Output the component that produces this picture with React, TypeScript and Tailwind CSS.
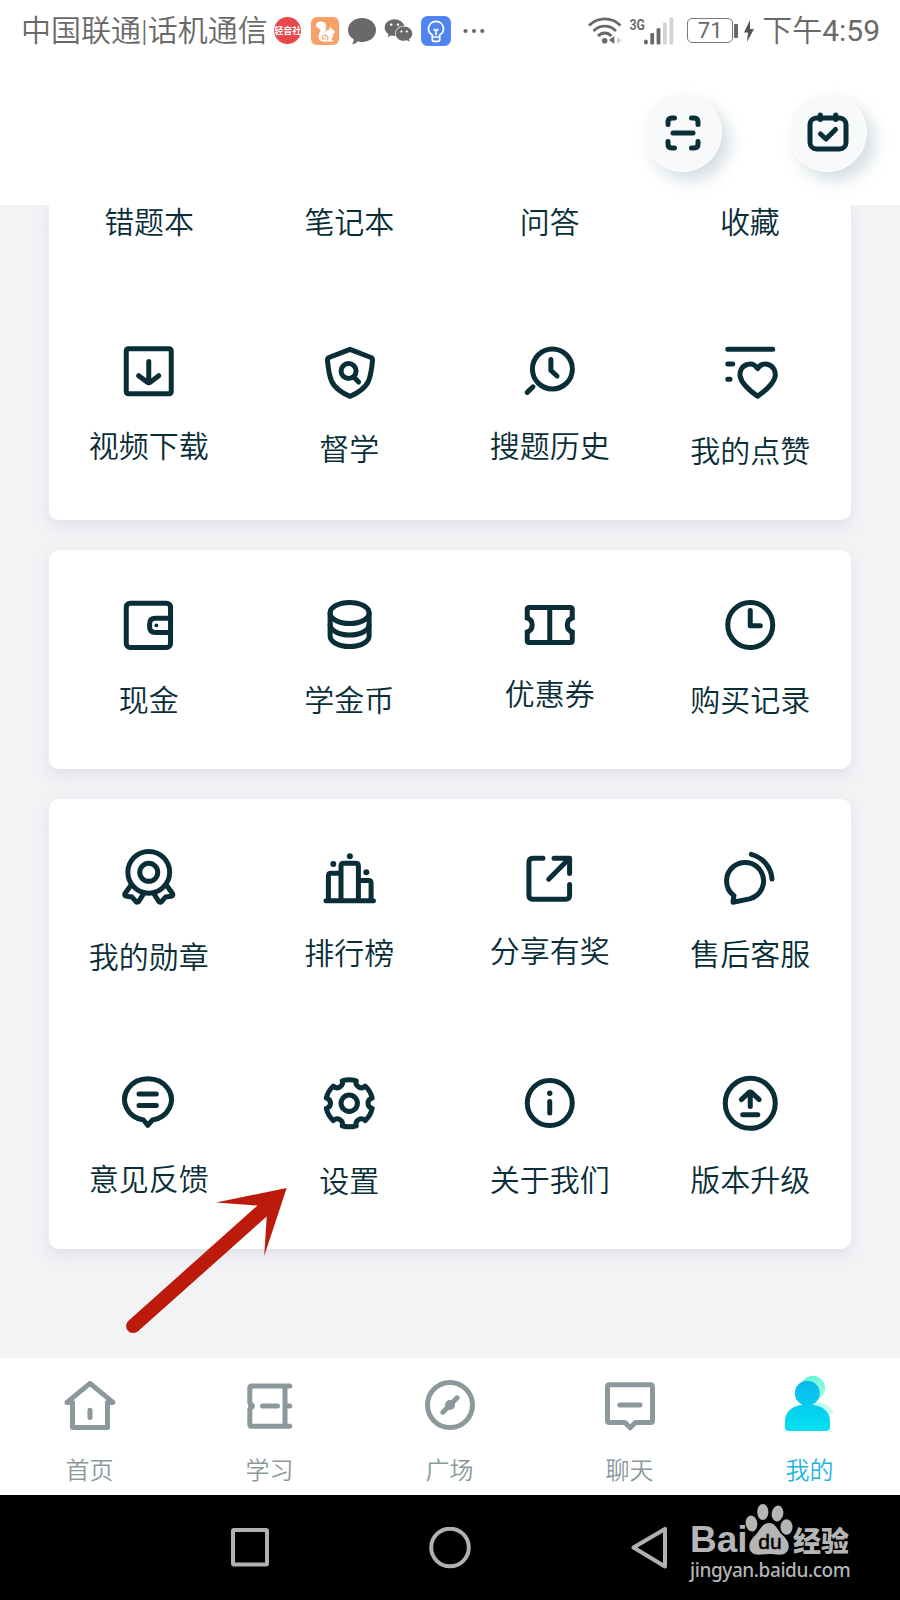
import type { ReactNode } from 'react';
import { FaWeixin } from 'react-icons/fa';
import clsx from 'clsx';

type Item = { label: string; gap: string; icon: ReactNode };

const studyTools: Item[] = [
  {
    label: '视频下载',
    gap: 'mt-[27px]',
    icon: (
      <>
        <rect x="7.25" y="6.7" width="45" height="45" rx="2" />
        <path d="M29.75 19.5V40M19.7 33.7L28 40Q29.75 41.3 31.5 40L39.8 33.7" />
      </>
    ),
  },
  {
    label: '督学',
    gap: 'mt-[30px]',
    icon: (
      <>
        <path d="M30 7.3L51 15.5Q52.7 16.5 52.5 18.5C51.8 26 51 33 48.5 39C45.5 46 37 51.8 30 54.3C23 51.8 14.5 46 11.5 39C9 33 8.2 26 7.5 18.5Q7.3 16.5 9 15.5Z" />
        <circle cx="28.6" cy="29" r="7.5" />
        <path d="M34 35.3L38.6 40" />
      </>
    ),
  },
  {
    label: '搜题历史',
    gap: 'mt-[27px]',
    icon: (
      <>
        <circle cx="32.4" cy="27" r="20" />
        <path d="M30.9 17.5V28.5L37 34M13 44.8L7.2 50.4" />
      </>
    ),
  },
  {
    label: '我的点赞',
    gap: 'mt-[32px]',
    icon: (
      <>
        <path d="M6.75 7.3H51.75M6.75 22H11.7M6.75 37.3H9" />
        <path d="M36.6 26.5C34 22.7 30 21.5 27 22.3C21 23.5 18.3 29 19.2 34.5C20.5 42 28.5 48.5 36.6 54.3C44.7 48.5 52.9 42 54.1 34.5C55 29 52 23.5 46.3 22.3C43 21.5 39.2 22.7 36.6 26.5Z" />
      </>
    ),
  },
];

const walletTools: Item[] = [
  {
    label: '现金',
    gap: 'mt-[28px]',
    icon: (
      <>
        <rect x="7.25" y="8.2" width="44.3" height="44.3" rx="4" />
        <path d="M51.5 23.2H36.5Q30.6 23.2 30.6 29V31.7Q30.6 37.5 36.5 37.5H51.5" />
        <circle cx="37.4" cy="30.4" r="1.9" fill="currentColor" stroke="none" />
      </>
    ),
  },
  {
    label: '学金币',
    gap: 'mt-[28px]',
    icon: (
      <>
        <ellipse cx="29.6" cy="18" rx="19.5" ry="10.5" />
        <path d="M10.1 18V41C10.1 46.8 18.8 51.5 29.6 51.5S49.1 46.8 49.1 41V18" />
        <path d="M10.1 29.5C10.1 35.3 18.8 40 29.6 40S49.1 35.3 49.1 29.5" />
      </>
    ),
  },
  {
    label: '优惠券',
    gap: 'mt-[22px]',
    icon: (
      <>
        <path
          strokeLinecap="butt"
          d="M7.25 25V14.5Q7.25 12.5 9.25 12.5H50.25Q52.25 12.5 52.25 14.5V25M7.25 35V45.5Q7.25 47.5 9.25 47.5H50.25Q52.25 47.5 52.25 45.5V35M29.75 12.5V47.5"
        />
        <path strokeLinecap="butt" d="M6 22.6C10 23.5 12.2 26.5 12.2 30S10 36.5 6 37.4M53.5 22.6C49.5 23.5 47.3 26.5 47.3 30S49.5 36.5 53.5 37.4" />
      </>
    ),
  },
  {
    label: '购买记录',
    gap: 'mt-[28px]',
    icon: (
      <>
        <circle cx="29.25" cy="30" r="22.5" />
        <path d="M29.25 15.5V30.8H39.3" />
      </>
    ),
  },
];

const serviceTools: Item[] = [
  {
    label: '我的勋章',
    gap: 'mt-[33px]',
    icon: (
      <>
        <circle cx="29.75" cy="25.3" r="20.9" />
        <circle cx="29.75" cy="25.3" r="9" />
        <path d="M11 39.5L5.9 46.8Q5 49 7.5 49.3L13 50L17 54.7Q18.6 56 20 54L24.5 46.8" />
        <path d="M48.5 39.5L53.6 46.8Q54.5 49 52 49.3L46.5 50L42.5 54.7Q40.9 56 39.5 54L35 46.8" />
      </>
    ),
  },
  {
    label: '排行榜',
    gap: 'mt-[29px]',
    icon: (
      <>
        <path d="M6 53.7H53.4M8.4 53.7V29Q8.4 26.2 11 26.2H21M21 53.7V19Q21 16.2 23.8 16.2H35.6Q38.4 16.2 38.4 19V53.7M38.4 33.4H48.3Q51.1 33.4 51.1 36.2V53.7" />
        <g fill="currentColor" stroke="none">
          <circle cx="13.3" cy="17" r="3" />
          <circle cx="29.9" cy="9.2" r="3" />
          <circle cx="46.3" cy="25.3" r="3" />
        </g>
      </>
    ),
  },
  {
    label: '分享有奖',
    gap: 'mt-[27px]',
    icon: (
      <path d="M23 11.2H12.9Q8.9 11.2 8.9 15.2V48.2Q8.9 52.2 12.9 52.2H45.6Q49.6 52.2 49.6 48.2V37.5M34 11.2H49.6V26.5M48.5 12.3L28.7 32.2" />
    ),
  },
  {
    label: '售后客服',
    gap: 'mt-[30px]',
    icon: (
      <path d="M12.9 48.7A18.5 18.5 0 1 1 28.5 51.9L12 55.2L12.9 48.7M30.3 7.3A27.5 27.5 0 0 1 51 32" />
    ),
  },
  {
    label: '意见反馈',
    gap: 'mt-[29px]',
    icon: (
      <>
        <path d="M24.5 47A23.4 20.8 0 1 1 33.5 47L28.7 52.3Z" />
        <path d="M20 21H37.3M20 32.4H37.3" />
      </>
    ),
  },
  {
    label: '设置',
    gap: 'mt-[31px]',
    icon: (
      <>
        <path d="M22.26 7.86A23.5 23.5 0 0 1 36.24 7.86A5.3 5.3 0 0 0 45.19 13.03A23.5 23.5 0 0 1 52.17 25.13A5.3 5.3 0 0 0 52.17 35.47A23.5 23.5 0 0 1 45.19 47.57A5.3 5.3 0 0 0 36.24 52.74A23.5 23.5 0 0 1 22.26 52.74A5.3 5.3 0 0 0 13.31 47.57A23.5 23.5 0 0 1 6.33 35.47A5.3 5.3 0 0 0 6.33 25.13A23.5 23.5 0 0 1 13.31 13.03A5.3 5.3 0 0 0 22.26 7.86Z" />
        <circle cx="29.25" cy="30.3" r="8.2" />
      </>
    ),
  },
  {
    label: '关于我们',
    gap: 'mt-[30px]',
    icon: (
      <>
        <circle cx="29.75" cy="30" r="22.5" />
        <circle cx="29.75" cy="20.3" r="2.7" fill="currentColor" stroke="none" />
        <path d="M29.75 28.4V40" />
      </>
    ),
  },
  {
    label: '版本升级',
    gap: 'mt-[30px]',
    icon: (
      <>
        <circle cx="29.25" cy="30.3" r="25" />
        <path d="M29.25 20V33.5M20.3 26.6L27.6 19.8Q29.25 18.5 30.9 19.8L38.2 26.6M21.7 41.7H36.8" />
      </>
    ),
  },
];

const tabs = [
  {
    label: '首页',
    icon: (
      <path d="M12.5 27.4H7L30 8.4L53 27.4H47.5V52.5H12.5ZM30 35.3V42.5" />
    ),
  },
  {
    label: '学习',
    icon: (
      <>
        <path d="M49.8 11H11.8Q9.8 11 9.8 13V27.5L12.5 31L9.8 34.5V49.2Q9.8 51.2 11.8 51.2H49.8M45 11V51.2M45 31H49.8M22.5 31H37.5" />
        <path d="M9 29L12 31L9 33Z" fill="currentColor" strokeWidth="1" />
      </>
    ),
  },
  {
    label: '广场',
    icon: (
      <>
        <circle cx="30" cy="30" r="22.5" />
        <path d="M22.8 37.2L37.2 22.8" />
        <circle cx="30" cy="30" r="5" fill="currentColor" stroke="none" />
      </>
    ),
  },
  {
    label: '聊天',
    icon: (
      <path d="M9.5 9.8H50.5Q52.5 9.8 52.5 11.8V45.5Q52.5 47.5 50.5 47.5H35.5L30.2 52.8L25 47.5H9.5Q7.5 47.5 7.5 45.5V11.8Q7.5 9.8 9.5 9.8ZM19.8 30H40" />
    ),
  },
  {
    label: '我的',
    active: true,
    icon: (
      <g stroke="none">
        <defs>
          <linearGradient id="me" x1="0" y1="0" x2="0" y2="1">
            <stop offset="0" stopColor="#0cb8e9" />
            <stop offset="1" stopColor="#02e1f1" />
          </linearGradient>
          <linearGradient id="meBack" x1="0" y1="0" x2="0" y2="1">
            <stop offset="0" stopColor="#66f7d2" />
            <stop offset="1" stopColor="#d9fbf8" />
          </linearGradient>
        </defs>
        <path d="M32.7 0.8a12.5 12.5 0 1 1-.1 0ZM30 27.5C42 26 52.5 31 54 39.5L44 40Z" fill="url(#meBack)" />
        <path
          d="M27.3 5.8a12.5 12.5 0 0 1 5 24C43 31.2 50 37 50 46V52Q50 56 46 56H9Q5 56 5 52V46C5 37 12 31.2 22.3 29.8A12.5 12.5 0 0 1 27.3 5.8Z"
          fill="url(#me)"
        />
      </g>
    ),
  },
];

function LineIcon({ children, className }: { children: ReactNode; className?: string }) {
  return (
    <svg
      viewBox="0 0 60 60"
      fill="none"
      stroke="currentColor"
      strokeWidth="5"
      strokeLinecap="round"
      strokeLinejoin="round"
      className={clsx('h-[60px] w-[60px] shrink-0', className)}
    >
      {children}
    </svg>
  );
}

function ToolGrid({ items, className }: { items: Item[]; className?: string }) {
  return (
    <div className={clsx('grid grid-cols-4 text-[#092e38]', className)}>
      {items.map((item) => (
        <div key={item.label} className="flex flex-col items-center">
          <LineIcon>{item.icon}</LineIcon>
          <span className={clsx('mr-px text-[30px] font-[350] leading-[30px] whitespace-nowrap', item.gap)}>{item.label}</span>
        </div>
      ))}
    </div>
  );
}

function StatusBar() {
  return (
    <div className="flex h-[61px] items-center pl-[21px] pr-[20px] text-[#696969]">
      <span className="font-[Roboto,'Noto_Sans_CJK_SC',sans-serif] text-[30px] font-[350] leading-[30px] whitespace-nowrap">
        中国联通|话机通信
      </span>
      <div className="ml-auto mr-[103px] flex items-center">
        <span className="flex h-[27px] w-[27px] items-center justify-center overflow-hidden rounded-full bg-[#e8484b] text-[9px] font-bold whitespace-nowrap text-white">
          轻音社
        </span>
        <svg viewBox="0 0 28 28" className="ml-[10px] h-7 w-7">
          <rect width="28" height="28" rx="6" fill="#f8a067" />
          <path
            fill="#fff"
            d="M13.5 5.5C9.5 3 4.8 5 5 8.5C5.2 11.5 9 11 9.5 13.5C9.8 15.2 7 17 7.5 20.5C7.8 23 10 24.5 13 24.5H22.5L20.5 22C22.5 20 22.5 18.5 21.3 16.8C23 17 24.3 15.8 23.8 14.2L20.5 11.2L19.5 9.5L18 12.5C16 13 15 14.5 14 15C15.5 12 16 8 13.5 5.5Z"
          />
          <path d="M16 23.5C18 21.5 16.7 17.5 13.3 18C10.5 18.5 10.5 22 13 22.2C14.7 22.2 14.8 20.2 13.4 20.2" fill="none" stroke="#f8a067" strokeWidth="1.1" />
        </svg>
        <svg viewBox="0 0 30 28" className="ml-[8px] h-7 w-[30px]" fill="#696969">
          <path d="M15 1C23 1 29 6 29 13S23 25 15 25C13 25 12 24.7 10.8 24.3C9.5 26 7.5 27 5 27.3C6.3 25.6 6.8 24 6.7 22.3C3 20 1 17 1 13C1 6 7 1 15 1Z" />
        </svg>
        <FaWeixin className="ml-[7px] h-[29px] w-[29px]" />
        <svg viewBox="0 0 30 30" className="ml-[8px] h-[30px] w-[30px]" fill="none" stroke="#fff" strokeWidth="1.7">
          <rect width="30" height="30" rx="6.5" fill="#5084f1" stroke="none" />
          <path d="M11.3 21V19C8.8 17.5 7.5 15.3 7.5 12.8A7.5 7.5 0 0 1 22.5 12.8C22.5 15.3 21.2 17.5 18.7 19V21Z" />
          <path d="M11.3 21V23.5Q11.3 25.3 13 25.3H17Q18.7 25.3 18.7 23.5V21M15 19V14M12.8 13L15 15L17.2 13" />
        </svg>
        <svg viewBox="0 0 22 6" className="ml-[12px] h-[6px] w-[22px]" fill="#696969">
          <circle cx="2.5" cy="3" r="2.1" />
          <circle cx="11" cy="3" r="2.1" />
          <circle cx="19.3" cy="3" r="2.1" />
        </svg>
      </div>
      <svg viewBox="0 0 34 28" className="h-7 w-[34px]" fill="none" stroke="#696969" strokeWidth="2.8">
        <path d="M1 8.5C10 -.3 23.5 -.3 32.5 8.5M5.5 14C12 7.5 21.5 7.5 28 14M10 19C14 15 19.5 15 23.5 19" />
        <circle cx="16.7" cy="23.8" r="2.8" fill="#696969" stroke="none" />
        <path d="M26.3 19V27L21 23Z" fill="#696969" stroke="none" />
        <path d="M29 20V27L33.5 23.5Z" fill="#d0d0d0" stroke="none" />
      </svg>
      <svg viewBox="0 0 44 28" className="ml-[8px] h-7 w-[44px]">
        <text x="-0.5" y="12.5" fontSize="15.5" fontWeight="700" fill="#696969" textLength="15.5" lengthAdjust="spacingAndGlyphs" fontFamily="Roboto, sans-serif">
          3G
        </text>
        <g fill="#696969">
          <rect x="14" y="22.5" width="3.8" height="5" rx="1.9" />
          <rect x="20.3" y="16" width="3.8" height="11.5" rx="1" />
          <rect x="26.6" y="11.3" width="3.8" height="16.2" rx="1" />
        </g>
        <g fill="#d3d3d3">
          <rect x="33" y="5.5" width="3.8" height="22" rx="1" />
          <rect x="39.5" y="0.5" width="3.8" height="27" rx="1" />
        </g>
      </svg>
      <div className="ml-[13px] flex items-center">
        <span className="flex h-[25px] w-[46px] items-center justify-center rounded-[5px] border-[1.5px] border-[#7a7a7a] font-[Roboto,sans-serif] text-[22px] leading-none">
          71
        </span>
        <span className="ml-[1px] h-[14px] w-[4px] rounded-[1px] bg-[#696969]" />
      </div>
      <svg viewBox="0 0 10 22" className="ml-[6px] h-[22px] w-[10px]" fill="#555">
        <path d="M6 0L0 12.5H4L3 22L10 9H6Z" />
      </svg>
      <span className="ml-[8px] font-[Roboto,'Noto_Sans_CJK_SC',sans-serif] text-[30px] leading-[30px] whitespace-nowrap">
        <span className="font-[350]">下午</span>4:59
      </span>
    </div>
  );
}

function RoundButton({ children }: { children: ReactNode }) {
  return (
    <button className="flex h-[79px] w-[79px] items-center justify-center rounded-full border border-white bg-[#f8f9fb] text-[#092e38] shadow-[8px_9px_16px_rgba(110,135,150,0.28)]">
      {children}
    </button>
  );
}

export default function App() {
  return (
    <div className="relative flex h-[1600px] w-[900px] flex-col overflow-hidden bg-[#f2f3f5] font-['Noto_Sans_CJK_SC',sans-serif]">
      <header className="relative z-10 h-[205px] shrink-0 bg-white">
        <StatusBar />
        <div className="flex justify-end gap-[66px] pt-[32px] pr-[33px]">
          <RoundButton>
            <svg viewBox="0 0 36 36" className="h-9 w-9" fill="none" stroke="currentColor" strokeWidth="5" strokeLinecap="round">
              <path d="M3 9.5V7Q3 3 7 3H9.5M26.5 3H29Q33 3 33 7V9.5M33 26.5V29Q33 33 29 33H26.5M9.5 33H7Q3 33 3 29V26.5M8 18H28" />
            </svg>
          </RoundButton>
          <RoundButton>
            <svg viewBox="0 0 42 40" className="mb-[2px] h-10 w-[42px]" fill="none" stroke="currentColor" strokeWidth="5" strokeLinecap="round" strokeLinejoin="round">
              <rect x="3" y="6" width="36" height="31" rx="6.5" />
              <path d="M13.3 3V7.5M28.7 3V7.5" />
              <path d="M13.5 22L19 27L28.5 17.5" />
            </svg>
          </RoundButton>
        </div>
      </header>

      <main className="flex h-[1153px] shrink-0 flex-col gap-[30px] px-[49px]">
        <section className="h-[315px] shrink-0 rounded-b-[10px] bg-white shadow-[0_6px_16px_rgba(50,50,110,0.09)]">
          <div className="grid h-[137px] grid-cols-4 pr-px text-center text-[30px] font-[350] leading-[31px] text-[#092e38]">
            <span>错题本</span>
            <span>笔记本</span>
            <span>问答</span>
            <span>收藏</span>
          </div>
          <ToolGrid items={studyTools} />
        </section>
        <section className="h-[219px] shrink-0 rounded-[10px] bg-white pt-[45px] shadow-[0_6px_16px_rgba(50,50,110,0.09)]">
          <ToolGrid items={walletTools} />
        </section>
        <section className="h-[450px] shrink-0 rounded-[10px] bg-white pt-[48px] shadow-[0_6px_16px_rgba(50,50,110,0.09)]">
          <ToolGrid items={serviceTools} className="auto-rows-[226px]" />
        </section>
      </main>

      <nav className="grid h-[137px] shrink-0 grid-cols-5 bg-white pt-[17px]">
        {tabs.map((tab) => (
          <div key={tab.label} className={clsx('flex flex-col items-center', tab.active ? 'text-[#1fb6dc]' : 'text-[#8b989c]')}>
            <LineIcon>{tab.icon}</LineIcon>
            <span className="mt-[22px] mr-px text-[24px] font-[350] leading-[24px]">{tab.label}</span>
          </div>
        ))}
      </nav>

      <footer className="flex h-[105px] shrink-0 items-center bg-black pl-[229px]">
        <svg viewBox="0 0 440 42" className="h-[42px] w-[440px]" fill="none" stroke="#b1b1b1" strokeWidth="4" strokeLinejoin="round">
          <rect x="4" y="3" width="34" height="34.5" rx="1" />
          <circle cx="221" cy="20.5" r="18.8" />
          <path d="M404.5 20.5L436 2V39.5Z" />
        </svg>
      </footer>

      {/* watermark */}
      <div className="absolute left-[690px] top-[1502px] w-[170px] text-[#b5b5b5]">
        <div className="flex h-[54px] items-end">
          <span className="w-[55px] font-['Liberation_Sans',sans-serif] text-[37px] font-bold leading-[32px]">Bai</span>
          <svg viewBox="0 0 48 54" className="h-[54px] w-12" fill="currentColor">
            <ellipse cx="6.5" cy="21.5" rx="5.8" ry="8" transform="rotate(-8 6.5 21.5)" />
            <ellipse cx="17.8" cy="10" rx="5.6" ry="8" />
            <ellipse cx="32.5" cy="11.5" rx="5.8" ry="8" transform="rotate(10 32.5 11.5)" />
            <ellipse cx="41.5" cy="25" rx="6" ry="7.8" />
            <path d="M24 21C31 21 32 28 37 32.5C43 38 45 43 43 48C40 55 31 52 24 52S8 55 5 48C3 43 5 38 11 32.5C15 28.5 17 21 24 21Z" />
            <text x="25" y="47" textAnchor="middle" fill="#000" stroke="#000" strokeWidth="0.5" fontSize="21" fontFamily="Liberation Sans, sans-serif">
              du
            </text>
          </svg>
          <span className="text-[28px] font-black leading-[32px] whitespace-nowrap">经验</span>
        </div>
        <div className="mt-[3px] font-['Noto_Sans',sans-serif] text-[19px] font-medium leading-[22px] tracking-[-0.42px] whitespace-nowrap">
          jingyan.baidu.com
        </div>
      </div>

      {/* pointer to 设置 */}
      <svg viewBox="0 0 165 150" className="absolute left-[124px] top-[1186px] h-[150px] w-[165px]" fill="#bc1a0b">
        <path d="M162.7 2L140.2 70L142.7 30.5L14 145.3A6.9 6.9 0 0 1 4.5 134.7L133.5 19.5L92 16.5Z" />
      </svg>
    </div>
  );
}
